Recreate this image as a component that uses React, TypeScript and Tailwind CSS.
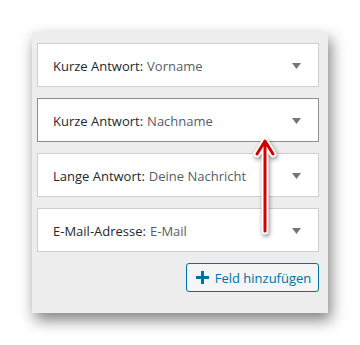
import React from "react";

const rows = [
  { label: "Kurze Antwort:", value: "Vorname", active: false },
  { label: "Kurze Antwort:", value: "Nachname", active: true },
  { label: "Lange Antwort:", value: "Deine Nachricht", active: false },
  { label: "E-Mail-Adresse:", value: "E-Mail", active: false },
];

export default function App() {
  return (
    <div
      className="relative w-[360px] h-[345px] bg-white pt-[32px] pl-[32px]"
      style={{ fontFamily: '"Open Sans", "Noto Sans", sans-serif' }}
    >
      <div className="w-[296px] h-[281px] bg-[#ededed] pt-[11px] pl-[5px] pr-[9px] flex flex-col gap-[11px] shadow-[3px_7px_14px_rgba(0,0,0,0.5)]">
        {rows.map((r, i) => (
          <div
            key={i}
            className={`h-[44px] bg-white border flex items-center pl-[15px] pr-[17px] ${
              r.active ? "border-[#8c8f94]" : "border-[#ccd0d4]"
            }`}
          >
            <span className="text-[13px] text-[#23282d] pt-[3px]">{r.label}</span>
            <span className="text-[13px] text-[#555d66] ml-[4px] pt-[3px]">{r.value}</span>
            <svg className="ml-auto mt-[1px]" width="9" height="6" viewBox="0 0 9 6">
              <path d="M0 0 L9 0 L4.5 6 Z" fill="#72777c" />
            </svg>
          </div>
        ))}
        <div className="flex justify-end">
          <button className="h-[29px] w-[133px] border border-[#0071a1] rounded-[3px] bg-[#f3f5f6] text-[#0071a1] text-[13px] flex items-center justify-center gap-[6px] pl-[2px]">
            <svg width="13" height="13" viewBox="0 0 13 13">
              <rect x="5" y="0" width="3" height="13" fill="#0071a1" />
              <rect x="0" y="5" width="13" height="3" fill="#0071a1" />
            </svg>
            <span className="pt-[2px]">Feld hinzufügen</span>
          </button>
        </div>
      </div>
      <svg
        className="absolute left-[249px] top-[133px]"
        width="32"
        height="108"
        viewBox="0 0 32 108"
        style={{ filter: "drop-shadow(1px 2px 2px rgba(0,0,0,0.45))" }}
      >
        <g fill="none" strokeLinecap="round" strokeLinejoin="round">
          <path d="M16 10 L16 98 M8 21 L16 8 L24 21" stroke="#ffffff" strokeWidth="7" />
          <path d="M16 10 L16 98 M8 21 L16 8 L24 21" stroke="#d40000" strokeWidth="3" />
        </g>
      </svg>
    </div>
  );
}
